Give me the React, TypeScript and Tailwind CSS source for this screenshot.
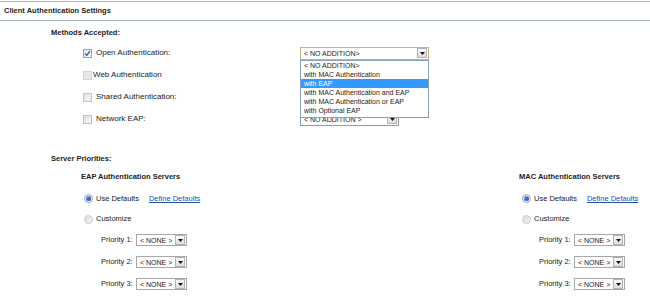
import React from "react";

const options = [
  "< NO ADDITION>",
  "with MAC Authentication",
  "with EAP",
  "with MAC Authentication and EAP",
  "with MAC Authentication or EAP",
  "with Optional EAP",
];

function Arrow() {
  return (
    <span className="flex h-[10px] w-[10px] shrink-0 items-center justify-center border border-[#aeb4ba] bg-gradient-to-b from-[#fbfbfb] to-[#dedede]">
      <svg width="5" height="3" viewBox="0 0 5 3">
        <path d="M0 0h5L2.5 3z" fill="#111" />
      </svg>
    </span>
  );
}

function Select({ text, width, border = "border-[#8a9aa8]" }: { text: string; width: string; border?: string }) {
  return (
    <div className={`flex h-[13px] items-center justify-between border bg-white pl-[3px] pr-[1px] ${border} ${width}`}>
      <span className="whitespace-nowrap text-[7px] leading-none text-[#222]">{text}</span>
      <Arrow />
    </div>
  );
}

function PrioritySelect() {
  return (
    <div className="flex h-[12px] w-[51px] items-center justify-between border border-[#a8a8a8] bg-white pl-[3px] pr-[1px]">
      <span className="whitespace-nowrap text-[7px] leading-none text-[#222]">&lt; NONE &gt;</span>
      <Arrow />
    </div>
  );
}

function Checkbox({ variant }: { variant: "checked" | "disabled" | "empty" }) {
  if (variant === "checked") {
    return (
      <span className="flex h-[9px] w-[9px] shrink-0 items-center justify-center border border-[#97a6bb] bg-gradient-to-br from-[#dfe3ea] to-[#ffffff]">
        <svg width="7" height="7" viewBox="0 0 7 7">
          <path d="M1 3.5l1.8 2L6 1" fill="none" stroke="#3a62c4" strokeWidth="1.4" />
        </svg>
      </span>
    );
  }
  if (variant === "disabled") {
    return <span className="h-[9px] w-[9px] shrink-0 border border-[#d2d5d8] bg-[#e6e6e6]" />;
  }
  return <span className="h-[9px] w-[9px] shrink-0 border border-[#bfc3c8] bg-gradient-to-br from-[#e0e0e0] to-[#f6f6f6]" />;
}

function Radio({ on }: { on?: boolean }) {
  return (
    <span
      className={`flex h-[9px] w-[9px] shrink-0 items-center justify-center rounded-full border ${
        on ? "border-[#9aa6b4] bg-[#eef1f5]" : "border-[#c8cacd] bg-gradient-to-br from-[#dcdcdc] to-[#f4f4f4]"
      }`}
    >
      {on && <span className="h-[5px] w-[5px] rounded-full bg-gradient-to-br from-[#6f9ae6] to-[#1f48a8]" />}
    </span>
  );
}

function ServerColumn({ title }: { title: string }) {
  return (
    <div className="flex flex-col">
      <div className="h-[10px] text-[7.5px] font-bold leading-[10px] text-[#222]">{title}</div>
      <div className="mt-[6px] flex h-[21px] items-center pl-[3px]">
        <Radio on />
        <span className="ml-[3px] text-[7.5px] text-[#222]">Use Defaults</span>
        <a className="ml-[10px] text-[7.5px] text-[#2150b0] underline">Define Defaults</a>
      </div>
      <div className="flex h-[20px] items-center pl-[3px]">
        <Radio />
        <span className="ml-[3px] text-[7.5px] text-[#222]">Customize</span>
      </div>
      {[1, 2, 3].map((n) => (
        <div key={n} className="flex h-[22px] items-center pl-[20px]">
          <span className="w-[35px] text-[7.5px] text-[#222]">Priority {n}:</span>
          <PrioritySelect />
        </div>
      ))}
    </div>
  );
}

export default function App() {
  const methods: { label: string; box: "checked" | "disabled" | "empty"; tight?: boolean }[] = [
    { label: "Open Authentication:", box: "checked" },
    { label: "Web Authentication", box: "disabled", tight: true },
    { label: "Shared Authentication:", box: "empty" },
    { label: "Network EAP:", box: "empty" },
  ];

  return (
    <div className="h-[301px] w-[650px] overflow-hidden bg-white font-['Liberation_Sans',Arial,sans-serif] text-[#222]">
      <div className="mt-[1px] flex h-[20px] items-center border-y border-[#a4b8b8] pl-[4px] text-[7.5px] font-bold">
        Client Authentication Settings
      </div>

      <div className="mt-[7px] h-[10px] pl-[51px] text-[7.5px] font-bold leading-[10px]">Methods Accepted:</div>

      <div className="mt-[4px] flex flex-col">
        {methods.map((m, i) => (
          <div key={m.label} className="flex h-[22px] items-center pl-[83px]">
            <div className="flex w-[217px] items-center">
              <Checkbox variant={m.box} />
              <span className={`${m.tight ? "ml-[1px]" : "ml-[4px]"} text-[8px]`}>{m.label}</span>
            </div>
            {i === 0 && (
              <div className="relative">
                <Select text="< NO ADDITION>" width="w-[129px]" border="border-[#c8b27e]" />
                <div className="absolute left-0 top-[13px] z-10 w-[129px] border border-[#8c9fb4] bg-white pb-[2px]">
                  {options.map((o) => (
                    <div
                      key={o}
                      className={`flex h-[9px] items-center whitespace-nowrap pl-[3px] text-[7px] leading-none ${
                        o === "with EAP" ? "bg-[#3399ff] text-white" : "text-[#222]"
                      }`}
                    >
                      {o}
                    </div>
                  ))}
                </div>
              </div>
            )}
            {i === 3 && <Select text="< NO ADDITION >" width="w-[99px]" />}
          </div>
        ))}
      </div>

      <div className="mt-[24px] h-[10px] pl-[51px] text-[7.5px] font-bold leading-[10px]">Server Priorities:</div>

      <div className="mt-[8px] flex pl-[81px]">
        <div className="w-[438px]">
          <ServerColumn title="EAP Authentication Servers" />
        </div>
        <ServerColumn title="MAC Authentication Servers" />
      </div>
    </div>
  );
}
